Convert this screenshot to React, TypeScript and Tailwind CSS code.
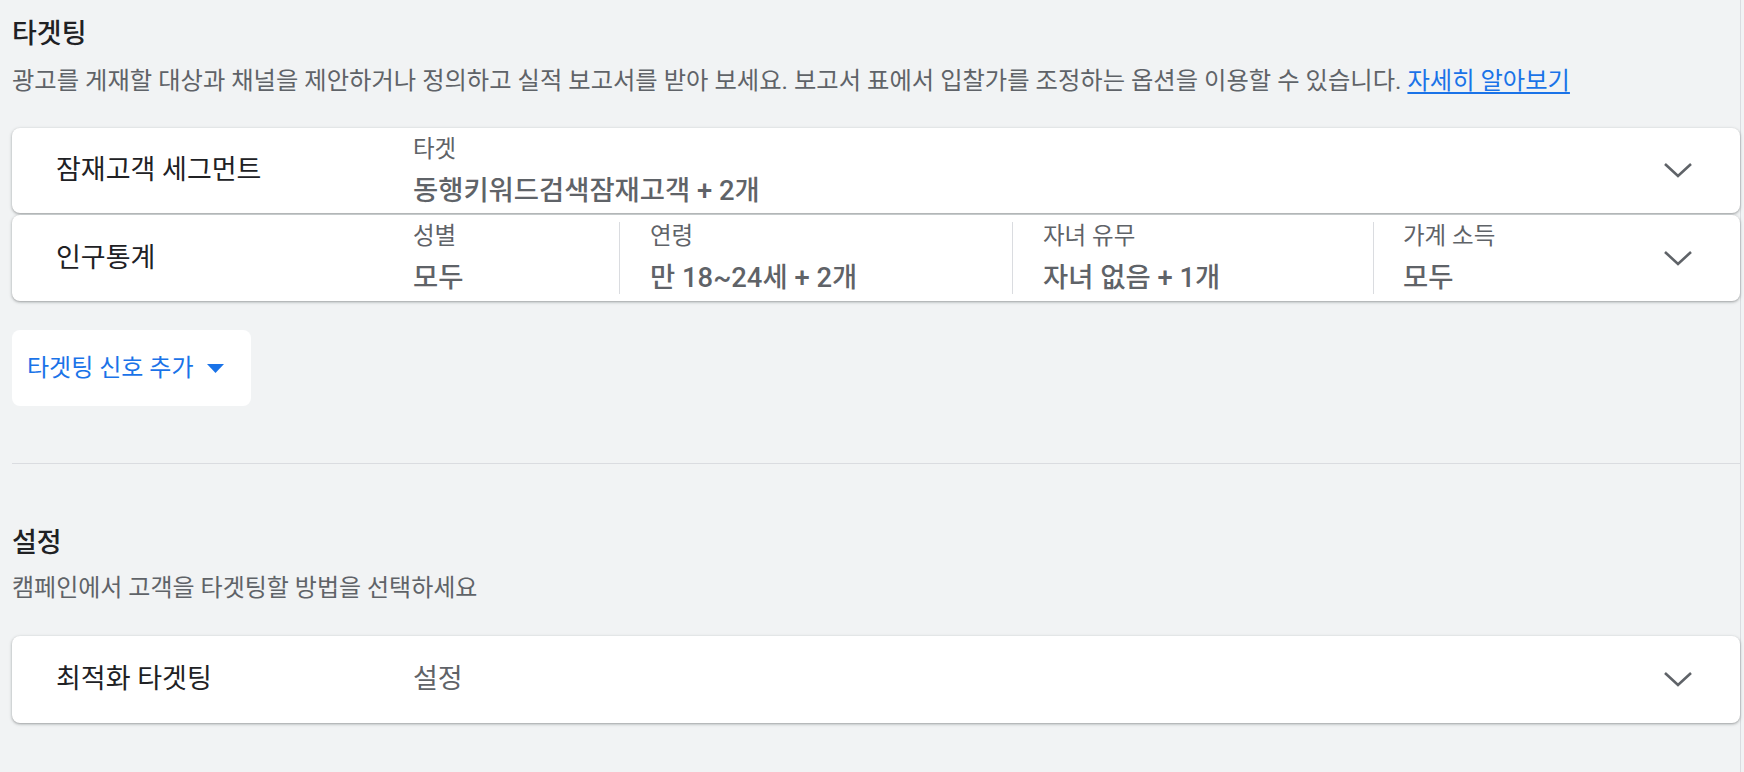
import React from 'react';

const FONT = { fontFamily: 'Roboto, "Noto Sans CJK KR", sans-serif' };

function Chevron() {
  return (
    <svg width="30" height="17" viewBox="0 0 30 17" className="shrink-0">
      <path d="M2 2 L15 14 L28 2" fill="none" stroke="#5f6368" strokeWidth="2.6" />
    </svg>
  );
}

function Field({ label, value }: { label: string; value: string }) {
  return (
    <div className="flex flex-col">
      <span className="text-[23.5px] leading-[28px] text-[#5f6368]">{label}</span>
      <span className="mt-[12px] text-[27.4px] leading-[32px] font-medium text-[#5f6368]">{value}</span>
    </div>
  );
}

function Panel({ title, children, h }: { title: string; children: React.ReactNode; h: string }) {
  return (
    <div
      className={`flex ${h} items-stretch rounded-[8px] bg-white shadow-[0_1px_2px_rgba(60,64,67,0.3),0_1px_3px_1px_rgba(60,64,67,0.15)]`}
    >
      <div className="flex w-[401px] shrink-0 items-center pl-[44px] text-[27px] text-[#202124]">{title}</div>
      <div className="flex min-w-0 flex-1 items-stretch">{children}</div>
      <div className="flex w-[77px] shrink-0 items-center">
        <Chevron />
      </div>
    </div>
  );
}

export default function App() {
  return (
    <div className="h-[772px] w-full overflow-hidden bg-[#f1f3f4]" style={FONT}>
      <div className="h-full w-[1741px] border-r border-[#dadce0] pl-[12px]">
        <h2 className="pt-[18px] text-[27px] leading-[32px] font-medium text-[#202124]">타겟팅</h2>
        <p className="mt-[16px] text-[24.3px] leading-[30px] text-[#5f6368]">
          광고를 게재할 대상과 채널을 제안하거나 정의하고 실적 보고서를 받아 보세요. 보고서 표에서 입찰가를 조정하는
          옵션을 이용할 수 있습니다.{' '}
          <a className="text-[#1a73e8] underline underline-offset-[3px]" href="#">
            자세히 알아보기
          </a>
        </p>

        <div className="mt-[32px] flex flex-col gap-[2px]">
          <Panel title="잠재고객 세그먼트" h="h-[85px]">
            <div className="flex items-center">
              <Field label="타겟" value="동행키워드검색잠재고객 + 2개" />
            </div>
          </Panel>
          <Panel title="인구통계" h="h-[86px]">
            <div className="my-[7px] flex w-[207px] items-center border-r border-[#dadce0]">
              <Field label="성별" value="모두" />
            </div>
            <div className="my-[7px] flex w-[393px] items-center border-r border-[#dadce0] pl-[30px]">
              <Field label="연령" value="만 18~24세 + 2개" />
            </div>
            <div className="my-[7px] flex w-[361px] items-center border-r border-[#dadce0] pl-[30px]">
              <Field label="자녀 유무" value="자녀 없음 + 1개" />
            </div>
            <div className="flex flex-1 items-center pl-[29px]">
              <Field label="가계 소득" value="모두" />
            </div>
          </Panel>
        </div>

        <button className="mt-[29px] flex h-[76px] w-[239px] items-center gap-[14px] rounded-[8px] bg-white pl-[15px] text-[24px] text-[#1a73e8]">
          <span>타겟팅 신호 추가</span>
          <svg width="17" height="9" viewBox="0 0 17 9">
            <path d="M0 0 L17 0 L8.5 9 Z" fill="#1a73e8" />
          </svg>
        </button>

        <div className="mt-[57px] h-px bg-[#dadce0]" />

        <h2 className="mt-[63px] text-[27px] leading-[32px] font-medium text-[#202124]">설정</h2>
        <p className="mt-[14px] text-[24px] leading-[30px] text-[#5f6368]">캠페인에서 고객을 타겟팅할 방법을 선택하세요</p>

        <div className="mt-[33px]">
          <Panel title="최적화 타겟팅" h="h-[87px]">
            <div className="flex items-center text-[27px] text-[#5f6368]">설정</div>
          </Panel>
        </div>
      </div>
    </div>
  );
}
